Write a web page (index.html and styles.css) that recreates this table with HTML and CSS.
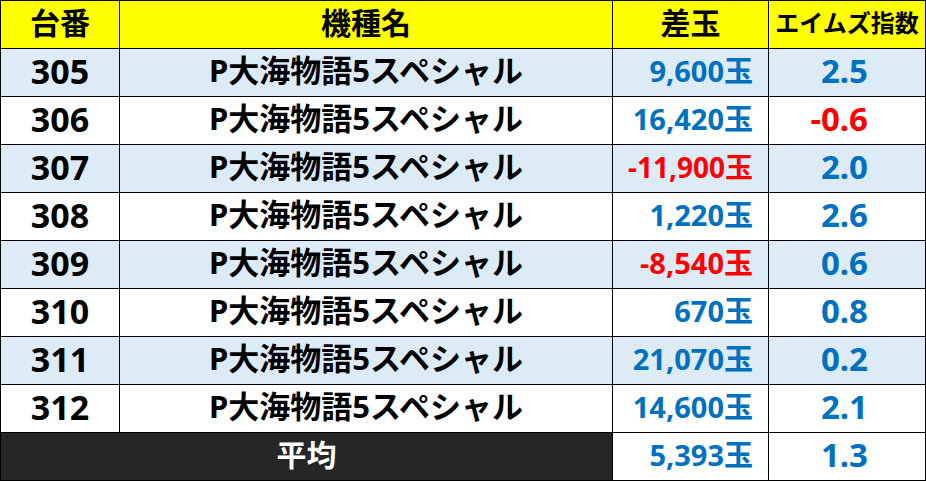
FILE: index.html
```html
<!DOCTYPE html>
<html lang="ja">
<head>
<meta charset="utf-8">
<title>エイムズ指数</title>
<link rel="stylesheet" href="styles.css">
</head>
<body>
<div class="sheet">
  <div class="cell head">台番</div>
  <div class="cell head">機種名</div>
  <div class="cell head">差玉</div>
  <div class="cell head head-small">エイムズ指数</div>

  <div class="cell num alt">305</div>
  <div class="cell name alt">P大海物語5スペシャル</div>
  <div class="cell diff alt">9,600玉</div>
  <div class="cell idx alt">2.5</div>

  <div class="cell num">306</div>
  <div class="cell name">P大海物語5スペシャル</div>
  <div class="cell diff">16,420玉</div>
  <div class="cell idx neg">-0.6</div>

  <div class="cell num alt">307</div>
  <div class="cell name alt">P大海物語5スペシャル</div>
  <div class="cell diff alt neg diff-long">-11,900玉</div>
  <div class="cell idx alt">2.0</div>

  <div class="cell num">308</div>
  <div class="cell name">P大海物語5スペシャル</div>
  <div class="cell diff">1,220玉</div>
  <div class="cell idx">2.6</div>

  <div class="cell num alt">309</div>
  <div class="cell name alt">P大海物語5スペシャル</div>
  <div class="cell diff alt neg">-8,540玉</div>
  <div class="cell idx alt">0.6</div>

  <div class="cell num">310</div>
  <div class="cell name">P大海物語5スペシャル</div>
  <div class="cell diff">670玉</div>
  <div class="cell idx">0.8</div>

  <div class="cell num alt">311</div>
  <div class="cell name alt">P大海物語5スペシャル</div>
  <div class="cell diff alt">21,070玉</div>
  <div class="cell idx alt">0.2</div>

  <div class="cell num">312</div>
  <div class="cell name">P大海物語5スペシャル</div>
  <div class="cell diff">14,600玉</div>
  <div class="cell idx">2.1</div>

  <div class="cell total-label">平均</div>
  <div class="cell diff">5,393玉</div>
  <div class="cell idx">1.3</div>
</div>
</body>
</html>
```

FILE: styles.css
```css
html, body {
  margin: 0;
  padding: 0;
  background: #ffffff;
}

.sheet {
  display: grid;
  grid-template-columns: 118px 492px 155px 156px;
  grid-auto-rows: 47px;
  gap: 1px;
  padding: 1px;
  width: 924px;
  background: #000000;
  font-family: "Noto Sans", "Noto Sans CJK JP", sans-serif;
  font-weight: 700;
  color: #000000;
}

.cell {
  display: flex;
  align-items: center;
  justify-content: center;
  background: #ffffff;
  line-height: 1;
  white-space: nowrap;
  padding-bottom: 4px;
  box-sizing: border-box;
}

.alt {
  background: #ddebf7;
}

.head {
  background: #ffff00;
  font-size: 30px;
}

.head-small {
  font-size: 24px;
}

.num {
  font-size: 34px;
}

.name {
  font-size: 31px;
}

.diff {
  justify-content: flex-end;
  padding-right: 15px;
  font-size: 29px;
  color: #0070c0;
}

.diff-long {
  font-size: 28px;
}

.idx {
  justify-content: flex-end;
  padding-right: 57px;
  font-size: 33px;
  color: #0070c0;
}

.neg {
  color: #ff0000;
}

.total-label {
  grid-column: span 2;
  background: #262626;
  color: #ffffff;
  font-size: 30px;
}
```
